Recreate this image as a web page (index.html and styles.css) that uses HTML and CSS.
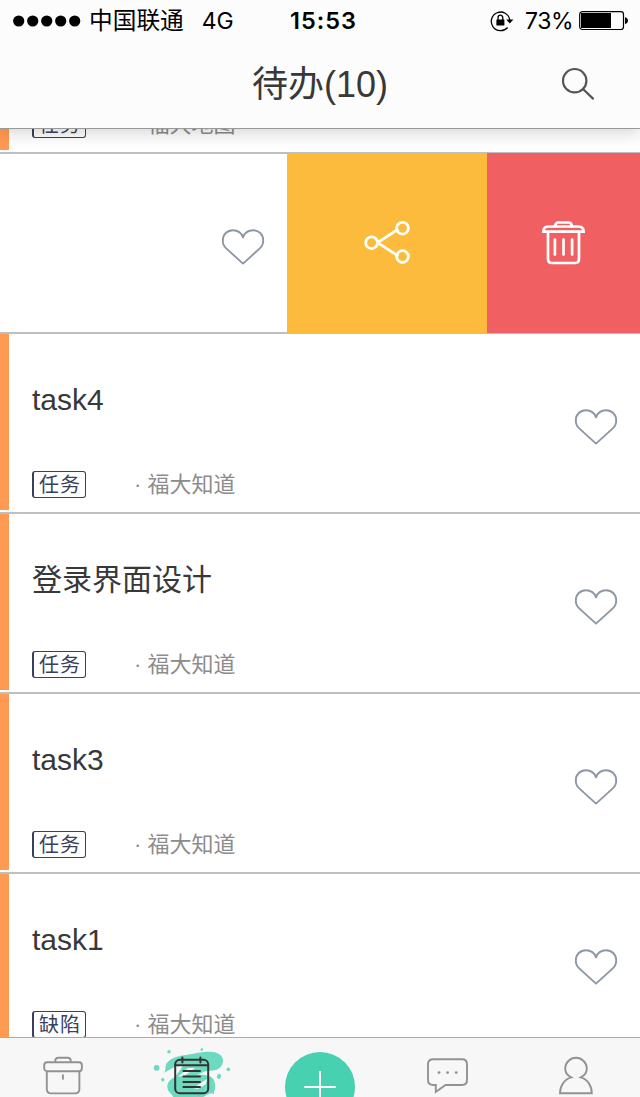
FILE: index.html
```html
<!DOCTYPE html>
<html lang="zh-CN">
<head>
  <meta charset="UTF-8">
  <meta name="viewport" content="width=device-width, initial-scale=1.0">
  <title>待办</title>
  <link rel="stylesheet" href="styles.css">
</head>
<body>
  <!-- shared icons -->
  <svg class="icon-defs" width="0" height="0">
    <symbol id="heart" viewBox="0 0 44 38">
      <path d="M22 35.6 L5.2 20.4 C2.6 18 1.8 15.2 1.8 12.4 C1.8 6.4 6.4 2.2 11.8 2.2 C16.6 2.2 20.6 5 22 9.4 C23.4 5 27.4 2.2 32.2 2.2 C37.6 2.2 42.2 6.4 42.2 12.4 C42.2 15.2 41.4 18 38.8 20.4 Z" fill="none" stroke="#8e97a5" stroke-width="1.9" stroke-linejoin="round"/>
    </symbol>
  </svg>

  <header class="header">
    <div class="status-bar">
      <div class="status-left">
        <svg class="signal" width="68" height="12" viewBox="0 0 68 12">
          <circle cx="5.7" cy="6" r="5.6"/>
          <circle cx="19.7" cy="6" r="5.6"/>
          <circle cx="33.7" cy="6" r="5.6"/>
          <circle cx="47.7" cy="6" r="5.6"/>
          <circle cx="61.7" cy="6" r="5.6"/>
        </svg>
        <span class="carrier">中国联通</span>
        <span class="network">4G</span>
      </div>
      <span class="time">15:53</span>
      <div class="status-right">
        <svg class="lock" width="24" height="22" viewBox="0 0 24 22">
          <path d="M17.6 17.5 A9.3 9.3 0 1 1 19.8 10" fill="none" stroke="#000" stroke-width="1.3"/>
          <path d="M16.2 9.6 H23.4 L19.8 13.6 Z"/>
          <rect x="6.4" y="9.4" width="8" height="6.2" rx="0.6"/>
          <path d="M8 10 V7.8 A2.4 2.6 0 0 1 12.8 7.8 V10" fill="none" stroke="#000" stroke-width="1.3"/>
        </svg>
        <span class="percent">73%</span>
        <svg class="battery" width="50" height="20" viewBox="0 0 50 20">
          <rect x="0.7" y="0.7" width="43.8" height="17.8" rx="2.8" fill="none" stroke="#000" stroke-width="1.2"/>
          <rect x="2" y="2" width="30" height="15"/>
          <path d="M46 6.2 Q49 6.8 49 9.6 Q49 12.4 46 13 Z"/>
        </svg>
      </div>
    </div>
    <div class="nav-bar">
      <h1>待办(10)</h1>
      <svg class="search" width="34" height="34" viewBox="0 0 34 34">
        <circle cx="13.7" cy="13.7" r="11.7"/>
        <path d="M22 22 L32 31.6"/>
      </svg>
    </div>
  </header>

  <main class="list">
    <div class="item">
      <div class="item-body">
        <div class="title"></div>
        <div class="meta"><span class="tag">任务</span><span class="project">· 福大地图</span></div>
      </div>
      <svg class="heart"><use href="#heart"/></svg>
    </div>

    <!-- swiped open -->
    <div class="item swiped">
      <div class="item-body"></div>
      <svg class="heart"><use href="#heart"/></svg>
      <div class="action share">
        <svg width="48" height="46" viewBox="0 0 48 46">
          <path d="M14.5 22.6 L34.4 9.8 M14.5 22.6 L34.4 35.4"/>
          <circle cx="8.6" cy="22.7" r="5.9"/>
          <circle cx="39.5" cy="8.2" r="5.9"/>
          <circle cx="39.5" cy="36.6" r="5.9"/>
        </svg>
      </div>
      <div class="action delete">
        <svg width="44" height="44" viewBox="0 0 44 44">
          <path d="M6 11 V38 Q6 42 10 42 H33 Q37 42 37 38 V11"/>
          <path d="M13 5.4 Q13.4 1.5 16.4 1.5 H26.6 Q29.6 1.5 30 5.4"/>
          <path d="M1.4 10.7 Q1.4 5.5 6.4 5.5 H36.6 Q41.6 5.5 41.6 10.7 Z"/>
          <path d="M12.9 18.5 V33.6 M21.5 18.5 V33.6 M30.1 18.5 V33.6"/>
        </svg>
      </div>
    </div>

    <div class="item">
      <div class="item-body">
        <div class="title">task4</div>
        <div class="meta"><span class="tag">任务</span><span class="project">· 福大知道</span></div>
      </div>
      <svg class="heart"><use href="#heart"/></svg>
    </div>

    <div class="item">
      <div class="item-body">
        <div class="title">登录界面设计</div>
        <div class="meta"><span class="tag">任务</span><span class="project">· 福大知道</span></div>
      </div>
      <svg class="heart"><use href="#heart"/></svg>
    </div>

    <div class="item">
      <div class="item-body">
        <div class="title">task3</div>
        <div class="meta"><span class="tag">任务</span><span class="project">· 福大知道</span></div>
      </div>
      <svg class="heart"><use href="#heart"/></svg>
    </div>

    <div class="item">
      <div class="item-body">
        <div class="title">task1</div>
        <div class="meta"><span class="tag">缺陷</span><span class="project">· 福大知道</span></div>
      </div>
      <svg class="heart"><use href="#heart"/></svg>
    </div>
  </main>

  <nav class="tab-bar">
    <a class="tab box">
      <svg width="40" height="40" viewBox="0 0 40 40">
        <path d="M3.8 15.3 V33 Q3.8 37.4 8.2 37.4 H32 Q36.4 37.4 36.4 33 V15.3"/>
        <rect x="1.2" y="6.2" width="37.7" height="9" rx="3"/>
        <path d="M12.3 6 V4.6 Q12.3 1.8 15.5 1.8 H24.5 Q27.7 1.8 27.7 4.6 V6"/>
        <path d="M19.9 18.4 V23.6"/>
      </svg>
    </a>
    <a class="tab active">
      <svg width="80" height="52" viewBox="0 0 80 52">
        <g class="splash">
          <path d="M13.4 24.8 C16 20 12.5 16.5 18.5 12.6 C22 9.5 28 8 33 7.2 C42 6 52 3.2 59 3.7 C68 4 72.4 8 72 13.6 C71.4 19.4 66 23 60 22.6 C55 22.4 50 25 46 27 C55 26 63.6 28 64 36 C65 40 63 42 62.8 46 C59 44 58 46 54 48 L48 52 H22 C24 49 20 46 17.5 43 C14.6 38 17 32 24 29 L32 18 C25 17 20 21 13.4 24.8 Z"/>
          <circle cx="5.6" cy="19.8" r="2.9"/>
          <circle cx="18" cy="3.7" r="1.7"/>
          <circle cx="50.8" cy="1.6" r="1.3"/>
          <circle cx="77.3" cy="21.4" r="1.8"/>
          <ellipse cx="68" cy="28.4" rx="2" ry="2.6" transform="rotate(25 68 28.4)"/>
          <circle cx="11.8" cy="31.8" r="1.7"/>
        </g>
        <path d="M27 28.8 L37 20 H44 L34 27.5 Z M42 40 L56 31 L55 36 L47 41 Z" class="gap"/>
        <rect x="24.2" y="11.8" width="33" height="33.4" rx="4.5"/>
        <path d="M24.2 17.2 H57.2 M31.4 9.6 V14.4 M49.4 9.6 V14.4"/>
        <path d="M32.4 22.9 H49 M32.4 28.6 H49 M32.4 34 H49 M32.4 39 H49"/>
      </svg>
    </a>
    <a class="tab add">
      <svg width="70" height="70" viewBox="0 0 70 70">
        <circle cx="35" cy="35" r="35"/>
        <path d="M19.3 35 H50.7 M35 19.3 V50.7"/>
      </svg>
    </a>
    <a class="tab message">
      <svg width="42" height="36" viewBox="0 0 42 36">
        <path d="M6.5 1.2 H35 Q40 1.2 40 6.2 V22 Q40 27 35 27 H18.5 L8.8 34 V27 H6.5 Q1 27 1 22 V6.2 Q1 1.2 6.5 1.2 Z"/>
        <g class="dots">
          <circle cx="12" cy="14.6" r="1.4"/>
          <circle cx="20.6" cy="14.6" r="1.4"/>
          <circle cx="29.2" cy="14.6" r="1.4"/>
        </g>
      </svg>
    </a>
    <a class="tab me">
      <svg width="36" height="40" viewBox="0 0 36 40">
        <path d="M13.2 21.4 C9 19.4 7.2 16.4 7.2 12.6 A10.8 10.8 0 0 1 28.8 12.6 C28.8 16.4 27 19.4 22.8 21.4 C29.5 23.2 33.8 29.8 33.8 37.2 H2 C2 29.8 6.5 23.2 13.2 21.4 Z"/>
      </svg>
    </a>
  </nav>
</body>
</html>
```
FILE: styles.css
```css
:root {
  --orange: #ff9a52;
  --yellow: #fcbb3d;
  --red: #f06063;
  --green: #48d1b0;
  --navy: #3a3f5e;
  --text: #383838;
  --text-light: #8c8c8c;
  --line: #bfbfbf;
}

* {
  box-sizing: border-box;
}

body {
  margin: 0;
  width: 640px;
  height: 1097px;
  display: flex;
  flex-direction: column;
  overflow: hidden;
  font-family: "Liberation Sans", "Noto Sans CJK SC", sans-serif;
  color: var(--text);
  background-color: #ffffff;
}

.icon-defs {
  position: absolute;
}

/* header */
.header {
  flex: none;
  height: 129px;
  background-color: #fcfcfc;
  border-bottom: 1px solid #999999;
  box-shadow: 0 4px 16px rgba(0, 0, 0, 0.17);
  position: relative;
  z-index: 1;
}

.status-bar {
  display: grid;
  grid-template-columns: 1fr 80px 1fr;
  align-items: center;
  height: 42px;
  padding: 0 11px 0 13px;
  font-family: Inter, "Noto Sans CJK SC", sans-serif;
  font-size: 23px;
  line-height: 42px;
  color: #000000;
}

.status-left,
.status-right {
  display: flex;
  align-items: center;
  height: 40px;
}

.status-right {
  justify-content: flex-end;
}

.signal {
  margin-top: -1px;
}

.carrier {
  margin-left: 8px;
  font-size: 23.7px;
}

.network {
  margin-left: 18px;
}

.time {
  padding-left: 5px;
  text-align: center;
  font-size: 23.5px;
  font-weight: 600;
  letter-spacing: 1px;
}

.lock {
  margin-top: -1px;
  margin-right: 11px;
}

.percent {
  letter-spacing: -0.5px;
}

.battery {
  margin-left: 6px;
}

.nav-bar {
  display: grid;
  grid-template-columns: 1fr auto 1fr;
  align-items: center;
  height: 86px;
}

.nav-bar h1 {
  grid-column: 2;
  margin: 0;
  font-size: 36px;
  font-weight: 400;
  line-height: 86px;
}

.search {
  justify-self: end;
  margin-top: -2px;
  margin-right: 45px;
  fill: none;
  stroke: #555555;
  stroke-width: 2.2;
  stroke-linecap: round;
}

/* list */
.list {
  flex: none;
  height: 908px;
  overflow: hidden;
}

.item {
  display: flex;
  height: 180px;
  border-bottom: 2px solid var(--line);
}

/* scrolled so that only the bottom of the first item shows */
.item:first-child {
  margin-top: -155px;
}

.item-body {
  flex: none;
  width: 574px;
  height: 176px;
  padding: 46px 0 0 23px;
  border-left: 9px solid var(--orange);
}

.title {
  height: 40px;
  font-size: 30px;
  line-height: 40px;
}

.meta {
  display: flex;
  align-items: center;
  margin-top: 51px;
  height: 27px;
}

.tag {
  width: 54px;
  height: 27px;
  padding-left: 1px;
  border: 1px solid var(--navy);
  border-left-width: 2px;
  border-radius: 3px;
  font-size: 20px;
  line-height: 26px;
  letter-spacing: 1px;
  text-align: center;
  color: var(--navy);
}

.project {
  margin-left: 48px;
  font-size: 22px;
  line-height: 27px;
  color: var(--text-light);
}

.heart {
  flex: none;
  width: 44px;
  height: 38px;
  margin-top: 74px;
}

.swiped .item-body {
  margin-left: -353px;
}

.action {
  flex: none;
  display: flex;
  justify-content: center;
  height: 180px;
  margin-top: -1px;
  padding-top: 67px;
}

.action svg {
  fill: none;
  stroke: #ffffff;
  stroke-linecap: round;
}

.share {
  width: 200px;
  margin-left: 22px;
  background-color: var(--yellow);
  stroke-width: 2.8;
}

.delete {
  width: 153px;
  padding-top: 68px;
  background-color: var(--red);
  stroke-width: 2.7;
}

/* bottom tabs */
.tab-bar {
  flex: none;
  display: grid;
  grid-template-columns: repeat(5, 128px);
  height: 60px;
  overflow: hidden;
  border-top: 1px solid #aaaaaa;
  background-color: #f7f7f7;
}

.tab {
  display: flex;
  justify-content: center;
  align-items: flex-start;
  padding-top: 18px;
}

.tab svg {
  flex: none;
  fill: none;
  stroke: #929292;
  stroke-width: 1.9;
}

.tab.box {
  padding-right: 2px;
}

.tab.active {
  padding-top: 10px;
  padding-right: 2px;
}

.tab.active svg {
  stroke: #333333;
  stroke-width: 2;
  stroke-linecap: round;
}

.tab .splash {
  fill: #6cdabf;
  stroke: none;
}

.tab .gap {
  fill: #f7f7f7;
  stroke: none;
}

.tab.add {
  padding-top: 14px;
}

.tab.add circle {
  fill: var(--green);
  stroke: none;
}

.tab.add path {
  stroke: #ffffff;
  stroke-width: 2;
}

.tab.message {
  padding-top: 20px;
}

.tab .dots {
  fill: #929292;
  stroke: none;
}
```
